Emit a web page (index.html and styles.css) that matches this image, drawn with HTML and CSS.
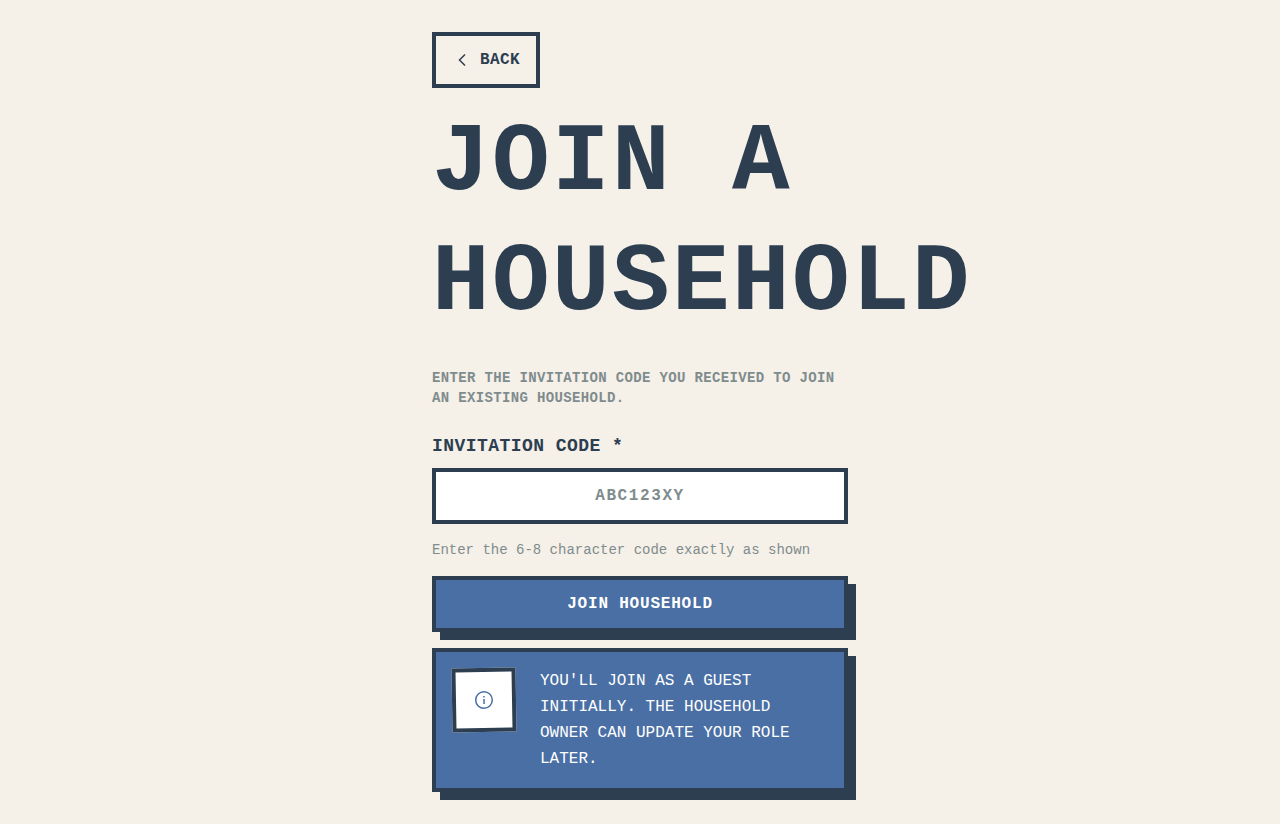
FILE: index.html
```html
<!DOCTYPE html>
<html lang="en">
<head>
<meta charset="utf-8">
<meta name="viewport" content="width=device-width, initial-scale=1">
<title>Join a Household</title>
<link rel="stylesheet" href="styles.css">
</head>
<body>
<main class="page">
  <button class="back" type="button">
    <svg class="back-icon" viewBox="0 0 20 20" aria-hidden="true"><path d="M13 4.5 7.5 10l5.5 5.5"/></svg>
    Back
  </button>
  <h1 class="title">Join a Household</h1>
  <p class="intro">Enter the invitation code you received to join an existing household.</p>
  <form class="form">
    <label class="label" for="code">Invitation code *</label>
    <input class="input" id="code" type="text" placeholder="ABC123XY" aria-describedby="hint">
    <p class="hint" id="hint">Enter the 6-8 character code exactly as shown</p>
    <button class="submit" type="submit">Join household</button>
  </form>
  <aside class="notice">
    <div class="notice-badge">
      <svg class="notice-icon" viewBox="0 0 24 24" aria-hidden="true"><circle cx="12" cy="12" r="8.3"/><path d="M12 11v5M12 8v1.4"/></svg>
    </div>
    <p class="notice-text">You'll join as a guest initially. The household owner can update your role later.</p>
  </aside>
</main>
</body>
</html>
```
FILE: styles.css
```css
*, *::before, *::after { box-sizing: border-box; }

:root {
  --ink: #2c3e50;
  --paper: #f5f0e8;
  --blue: #4a6fa5;
  --muted: #7f8c8d;
}

body {
  margin: 0;
  background: var(--paper);
  color: var(--ink);
  font-family: "Liberation Mono", "Courier New", monospace;
}

.page {
  max-width: 448px;
  margin: 0 auto;
  padding: 32px 16px;
}

.back {
  display: inline-flex;
  align-items: center;
  gap: 8px;
  height: 56px;
  padding: 0 16px;
  border: 4px solid var(--ink);
  background: transparent;
  color: var(--ink);
  font: bold 16px/24px "Liberation Mono", monospace;
  letter-spacing: 0.025em;
  text-transform: uppercase;
}

.back-icon {
  width: 20px;
  height: 20px;
  fill: none;
  stroke: currentColor;
  stroke-width: 1.5;
}

.title {
  margin: 16px 0 24px;
  font-size: 96px;
  line-height: 120px;
  letter-spacing: 0.025em;
  text-transform: uppercase;
}

.intro {
  margin: 0 0 24px;
  color: var(--muted);
  font-size: 14px;
  font-weight: bold;
  line-height: 20px;
  letter-spacing: 0.025em;
  text-transform: uppercase;
}

.form {
  display: flex;
  flex-direction: column;
}

.label {
  margin-bottom: 8px;
  font-size: 18px;
  font-weight: bold;
  line-height: 28px;
  letter-spacing: 0.025em;
  text-transform: uppercase;
}

.input {
  width: 100%;
  height: 56px;
  padding: 0 16px;
  border: 4px solid var(--ink);
  border-radius: 0;
  background: #fff;
  color: var(--ink);
  font: bold 16px/24px "Liberation Mono", monospace;
  letter-spacing: 0.1em;
  text-align: center;
}

.input::placeholder { color: var(--muted); opacity: 1; }

.hint {
  margin: 16px 0;
  color: var(--muted);
  font-size: 14px;
  line-height: 20px;
}

.submit {
  height: 56px;
  border: 4px solid var(--ink);
  background: var(--blue);
  box-shadow: 8px 8px 0 var(--ink);
  color: #fff;
  font: bold 16px/24px "Liberation Mono", monospace;
  letter-spacing: 0.05em;
  text-transform: uppercase;
}

.notice {
  display: flex;
  align-items: flex-start;
  gap: 24px;
  margin-top: 16px;
  padding: 16px;
  border: 4px solid var(--ink);
  background: var(--blue);
  box-shadow: 8px 8px 0 var(--ink);
  color: #fff;
}

.notice-badge {
  display: grid;
  flex: none;
  place-items: center;
  width: 64px;
  height: 64px;
  border: 4px solid var(--ink);
  background: #fff;
  color: var(--blue);
  transform: rotate(-1deg);
}

.notice-icon {
  width: 24px;
  height: 24px;
  fill: none;
  stroke: currentColor;
  stroke-width: 1.5;
}

.notice-text {
  margin: 0;
  font-size: 16px;
  line-height: 26px;
  text-transform: uppercase;
}
```
